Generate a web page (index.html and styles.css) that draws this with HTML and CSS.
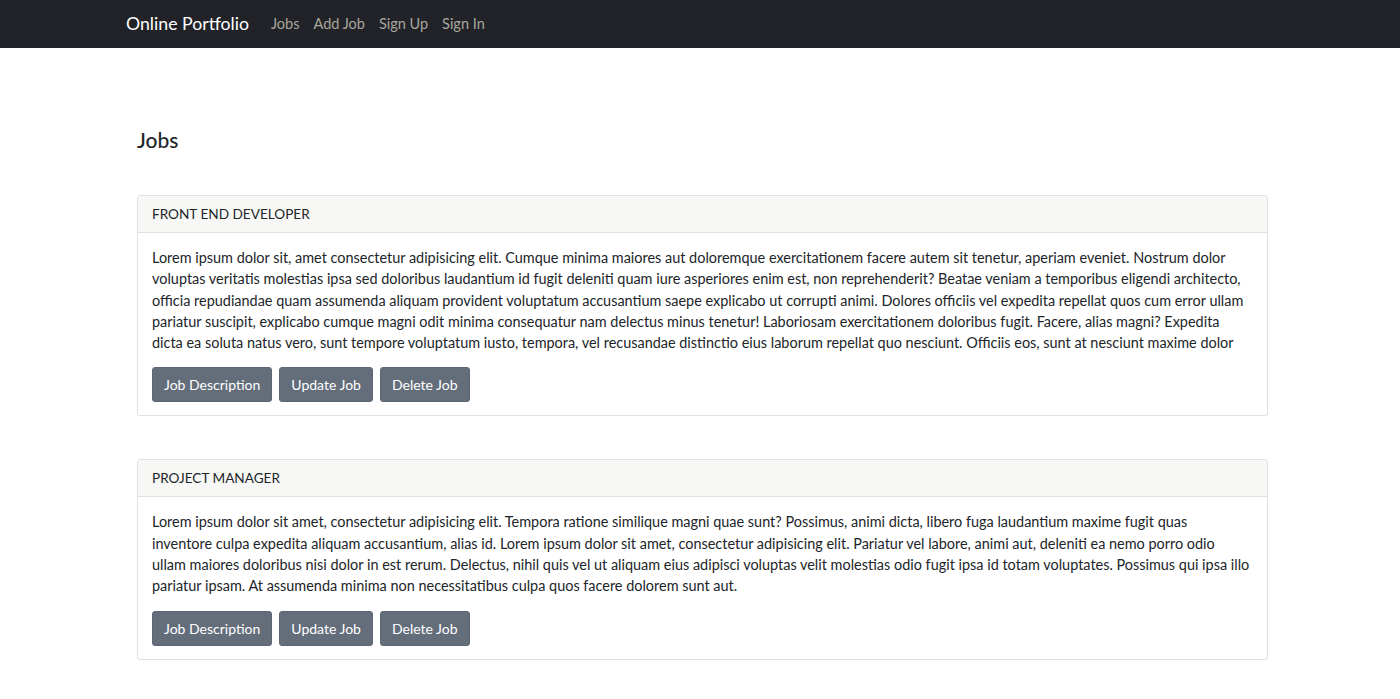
FILE: index.html
```html
<!DOCTYPE html>
<html>
<head>
<meta charset="utf-8">
<title>Online Portfolio</title>
<link rel="stylesheet" href="styles.css">
</head>
<body>
<nav class="navbar">
  <div class="nav-inner">
    <a class="brand" href="#">Online Portfolio</a>
    <ul class="nav-links">
      <li><a href="#">Jobs</a></li>
      <li><a href="#">Add Job</a></li>
      <li><a href="#">Sign Up</a></li>
      <li><a href="#">Sign In</a></li>
    </ul>
  </div>
</nav>
<main class="main">
  <h1 class="page-title">Jobs</h1>
  <section class="card">
    <div class="card-header">FRONT END DEVELOPER</div>
    <div class="card-body">
      <p class="card-text">Lorem ipsum dolor sit, amet consectetur adipisicing elit. Cumque minima maiores aut doloremque exercitationem facere autem sit tenetur, aperiam eveniet. Nostrum dolor<br>voluptas veritatis molestias ipsa sed doloribus laudantium id fugit deleniti quam iure asperiores enim est, non reprehenderit? Beatae veniam a temporibus eligendi architecto,<br>officia repudiandae quam assumenda aliquam provident voluptatum accusantium saepe explicabo ut corrupti animi. Dolores officiis vel expedita repellat quos cum error ullam<br>pariatur suscipit, explicabo cumque magni odit minima consequatur nam delectus minus tenetur! Laboriosam exercitationem doloribus fugit. Facere, alias magni? Expedita<br>dicta ea soluta natus vero, sunt tempore voluptatum iusto, tempora, vel recusandae distinctio eius laborum repellat quo nesciunt. Officiis eos, sunt at nesciunt maxime dolor</p>
      <div class="actions">
        <a class="btn" href="#">Job Description</a>
        <a class="btn" href="#">Update Job</a>
        <a class="btn" href="#">Delete Job</a>
      </div>
    </div>
  </section>
  <section class="card">
    <div class="card-header">PROJECT MANAGER</div>
    <div class="card-body">
      <p class="card-text">Lorem ipsum dolor sit amet, consectetur adipisicing elit. Tempora ratione similique magni quae sunt? Possimus, animi dicta, libero fuga laudantium maxime fugit quas<br>inventore culpa expedita aliquam accusantium, alias id. Lorem ipsum dolor sit amet, consectetur adipisicing elit. Pariatur vel labore, animi aut, deleniti ea nemo porro odio<br>ullam maiores doloribus nisi dolor in est rerum. Delectus, nihil quis vel ut aliquam eius adipisci voluptas velit molestias odio fugit ipsa id totam voluptates. Possimus qui ipsa illo<br>pariatur ipsam. At assumenda minima non necessitatibus culpa quos facere dolorem sunt aut.</p>
      <div class="actions">
        <a class="btn" href="#">Job Description</a>
        <a class="btn" href="#">Update Job</a>
        <a class="btn" href="#">Delete Job</a>
      </div>
    </div>
  </section>
</main>
</body>
</html>
```
FILE: styles.css
```css
* { box-sizing: border-box; }
html, body {
  margin: 0;
  padding: 0;
  background: #fff;
  color: #212529;
  font-family: "Lato", "Noto Sans", sans-serif;
  font-size: 14px;
  line-height: 1.5;
}
a { text-decoration: none; }

.navbar {
  background: #212329;
  height: 48px;
}
.nav-inner {
  height: 48px;
  display: flex;
  align-items: center;
  padding-left: 126px;
}
.brand {
  color: #fff;
  font-size: 17.7px;
  margin-right: 22px;
}
.nav-links {
  list-style: none;
  margin: 0;
  padding: 0;
  display: flex;
  gap: 14px;
}
.nav-links a {
  display: block;
  color: #a8a69d;
  font-size: 14.5px;
}

.main {
  width: 1131px;
  margin-left: 137px;
  padding-top: 78px;
  padding-bottom: 40px;
}
.page-title {
  margin: 0 0 42px;
  font-size: 21px;
  font-weight: 500;
  line-height: 27px;
  color: #212529;
}
.card {
  border: 1px solid #dde1e5;
  border-radius: 3px;
  margin-bottom: 43px;
  background: #fff;
}
.card-header {
  background: #f7f7f5;
  border-bottom: 1px solid #dde1e5;
  padding: 8px 14px;
  height: 37px;
  font-size: 13.6px;
  line-height: 20px;
}
.card-body {
  padding: 14px 14px 13px;
}
.card-text {
  margin: 0 0 14px;
  font-size: 14.45px;
  line-height: 21.3px;
  white-space: nowrap;
}
.actions {
  display: flex;
  gap: 7px;
}
.btn {
  display: inline-block;
  background: #646e7b;
  color: #fff;
  border: 1px solid #5d6673;
  border-radius: 3px;
  padding: 6px 11px;
  font-size: 14px;
  line-height: 21px;
}
```
